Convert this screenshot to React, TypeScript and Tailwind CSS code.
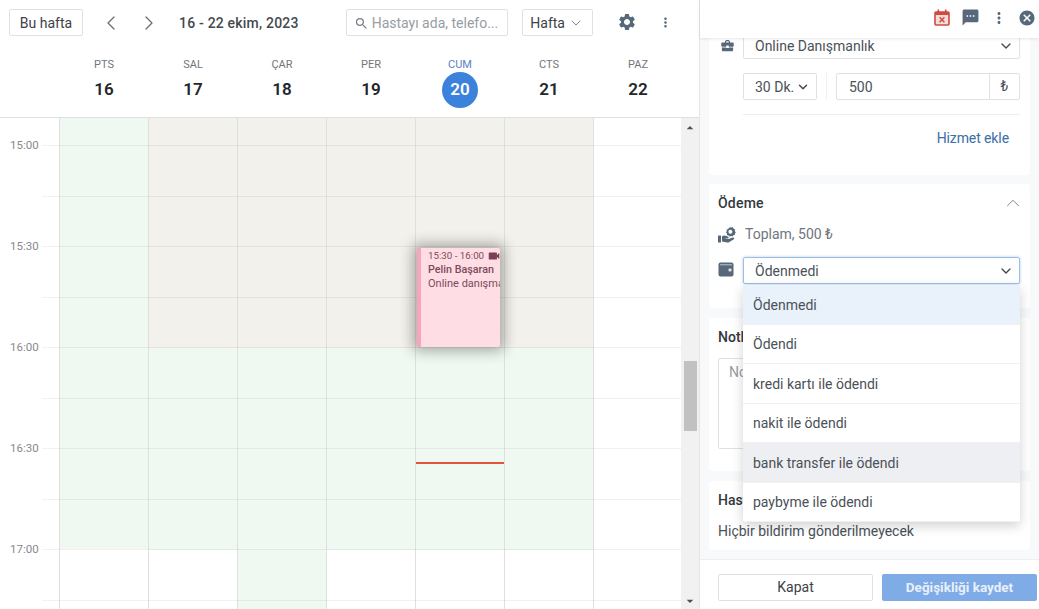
import { ChevronDown, ChevronLeft, ChevronRight, ChevronUp } from 'lucide-react';
import {
  MdArrowDropDown,
  MdArrowDropUp,
  MdBusinessCenter,
  MdCancel,
  MdMoreVert,
  MdSearch,
  MdSettings,
  MdSms,
  MdVideocam,
} from 'react-icons/md';

const days = [
  { label: 'PTS', date: 16 },
  { label: 'SAL', date: 17 },
  { label: 'ÇAR', date: 18 },
  { label: 'PER', date: 19 },
  { label: 'CUM', date: 20, today: true },
  { label: 'CTS', date: 21 },
  { label: 'PAZ', date: 22 },
];

// beige = closed part of the day, green = bookable
const columns = [
  { beige: false, green: 431 },
  { beige: true, green: 202 },
  { beige: true, green: 492 },
  { beige: true, green: 202 },
  { beige: true, green: 202 },
  { beige: true, green: 202 },
  { beige: false, green: 0 },
];

const rows = [28, 50.5, 50.5, 50.5, 50.5, 50.5, 50.5, 50.5, 50.5, 50.5];
const times = ['15:00', '15:30', '16:00', '16:30', '17:00'];
const paymentOptions = ['Ödenmedi', 'Ödendi', 'kredi kartı ile ödendi', 'nakit ile ödendi', 'bank transfer ile ödendi', 'paybyme ile ödendi'];

function CalendarCancelIcon() {
  return (
    <svg width="16" height="17" viewBox="0 0 16 17" className="mb-[1px]">
      <rect x="1" y="3" width="14" height="13" rx="1" fill="#f6dcd8" stroke="#cf4a42" strokeWidth="1.6" />
      <rect x="1" y="3" width="14" height="3" fill="#cf4a42" />
      <rect x="3.5" y="0.5" width="1.6" height="3.5" fill="#cf4a42" />
      <rect x="10.9" y="0.5" width="1.6" height="3.5" fill="#cf4a42" />
      <path d="M5.6 8.2l4.8 5M10.4 8.2l-4.8 5" stroke="#cf4a42" strokeWidth="1.4" fill="none" />
    </svg>
  );
}

function HandCoinIcon() {
  return (
    <svg width="18" height="17" viewBox="0 0 18 17" className="text-[#56687a]">
      <path
        fill="currentColor"
        d="M12 0.6l1.3 1 1.6-.3.7 1.5 1.5.7-.3 1.6 1 1.3-1 1.3.1 1.2-1.6.4-.9 1.2-1.5-.5-1.4.6-1-1.2-1.6-.3.1-1.6-1.1-1.2 1-1.3-.2-1.6 1.6-.5.7-1.4 1.5.4z"
      />
      <circle cx="12.4" cy="5.8" r="2" fill="#ffffff" />
      <rect x="0" y="9.5" width="3" height="7" rx="0.5" fill="currentColor" />
      <path
        fill="currentColor"
        d="M4 10.2c1.5-1 3-1 4.4-.3l1.8.9c.8.4.5 1.6-.4 1.6H7.6v.7h3l4.2-1.6c1.2-.4 2 1 1 1.7l-4.8 3.1c-.5.3-1 .4-1.6.3L4 15.5z"
      />
    </svg>
  );
}

function WalletIcon() {
  return (
    <svg width="16" height="15" viewBox="0 0 16 15" className="mt-[5px] text-[#56687a]">
      <rect x="0.5" y="0.5" width="15" height="14" rx="2" fill="currentColor" />
      <rect x="2" y="2" width="12" height="1.4" fill="#9fabb6" />
      <rect x="10.5" y="6.5" width="3" height="3" rx="1" fill="#dfe4e8" />
    </svg>
  );
}

function Calendar() {
  return (
    <div className="flex h-full w-[700px] shrink-0 flex-col border-r border-[#e3e5e8]">
      <div className="flex h-[45px] shrink-0 items-start pl-[9px] pt-[9px]">
        <button className="h-[27px] w-[74px] rounded-[2px] border border-[#dfe1e4] pt-[1px] text-[14px] text-[#3c4248]">Bu hafta</button>
        <ChevronLeft className="ml-[16px] mt-[2px] text-[#676d73]" size={24} strokeWidth={1.25} />
        <ChevronRight className="ml-[14px] mt-[2px] text-[#676d73]" size={24} strokeWidth={1.25} />
        <span className="ml-[18px] mt-[4px] text-[14px] font-medium tracking-[0.2px] text-[#43494f]">16 - 22 ekim, 2023</span>
        <div className="ml-[47px] flex h-[27px] w-[162px] items-center rounded-[2px] border border-[#dfe1e4] pl-[7px] pt-[1px] text-[14px] text-[#989da3]">
          <MdSearch className="text-[#7b8187]" size={15} />
          <span className="ml-[3px]">Hastayı ada, telefo...</span>
        </div>
        <button className="ml-[14px] flex h-[27px] w-[71px] items-center justify-center gap-[3px] rounded-[2px] border border-[#dfe1e4] pt-[1px] text-[14px] text-[#3c4248]">
          Hafta
          <ChevronDown className="text-[#676d73]" size={16} strokeWidth={1.25} />
        </button>
        <MdSettings className="ml-[24px] mt-[3px] text-[#56687a]" size={20} />
        <MdMoreVert className="ml-[21px] mt-[6px] text-[#56687a]" size={15} />
      </div>

      <div className="flex h-[73px] shrink-0 border-b border-[#dedfdf] pl-[59.5px]">
        {days.map((day) => (
          <div key={day.label} className="flex w-[89px] flex-col items-center">
            <span className={`mt-[13px] text-[11px] leading-[14px] ${day.today ? 'text-[#5b82c4]' : 'text-[#70767c]'}`}>{day.label}</span>
            <span
              className={`flex h-[36px] w-[36px] items-center justify-center rounded-full text-[17px] font-semibold ${
                day.today ? 'bg-[#3b82dc] text-white' : 'text-[#23272b]'
              }`}
            >
              {day.date}
            </span>
          </div>
        ))}
      </div>

      <div className="flex min-h-0 flex-1">
        <div className="relative flex min-w-0 flex-1 overflow-hidden">
          <div className="w-[59px] shrink-0 pt-[19px]">
            {times.map((time) => (
              <div key={time} className="h-[101px] pl-[10px] text-[11.5px] leading-[16px] text-[#858a8f]">
                {time}
              </div>
            ))}
          </div>

          {columns.map((column, i) => (
            <div key={i} className="flex w-[89px] shrink-0 flex-col border-l border-[#dfe0de]">
              {column.beige && <div className="h-[230px] shrink-0 bg-[#f2f1eb]" />}
              <div className="shrink-0 bg-[#f0f8f2]" style={{ height: column.green }} />
            </div>
          ))}

          <div className="pointer-events-none absolute inset-0 left-[42px] flex flex-col">
            {rows.map((height, i) => (
              <div key={i} className="shrink-0 border-b border-[#0000000e]" style={{ height }} />
            ))}
          </div>

          <div className="absolute left-[417px] top-[130px] flex h-[99px] w-[83px] overflow-hidden rounded-[2px] border-l-[4px] border-[#f5a6bd] bg-[#ffdde5] pl-[7px] pt-[1px] text-[#7c4a5a] shadow-[0_0_14px_4px_rgba(0,0,0,0.32)]">
            <div className="min-w-0 flex-1">
              <div className="flex items-center whitespace-nowrap text-[9.75px] leading-[14px]">
                15:30 - 16:00
                <MdVideocam className="ml-[3px] shrink-0 text-[#7c3f52]" size={14} />
              </div>
              <div className="whitespace-nowrap text-[10.75px] font-medium leading-[14px]">Pelin Başaran</div>
              <div className="whitespace-nowrap text-[11px] leading-[13px]">Online danışma</div>
            </div>
          </div>

          <div className="absolute left-[416px] top-[344px] h-[2px] w-[88px] bg-[#e2543f]" />
        </div>

        <div className="flex w-[18px] shrink-0 flex-col items-center bg-[#f1f1f1]">
          <MdArrowDropUp className="mt-[2px] text-[#505050]" size={16} />
          <div className="mt-[225px] h-[70px] w-[13px] bg-[#c1c1c1]" />
          <div className="flex-1" />
          <MdArrowDropDown className="text-[#505050]" size={16} />
        </div>
      </div>
    </div>
  );
}

function Panel() {
  return (
    <div className="flex h-full min-w-0 flex-1 flex-col bg-[#f7f9fb]">
      <div className="relative z-10 flex h-[38px] shrink-0 items-center justify-end bg-white pb-[3px] pr-[3px] shadow-[0_1px_3px_rgba(0,0,0,0.1)]">
        <CalendarCancelIcon />
        <MdSms className="ml-[11px] text-[#56687a]" size={19} />
        <MdMoreVert className="ml-[10px] text-[#56687a]" size={18} />
        <MdCancel className="ml-[10px] text-[#56687a]" size={18} />
      </div>

      <div className="min-h-0 flex-1 overflow-hidden px-[9px]">
        <div className="-mt-[18px] flex flex-col">
          <section className="h-[155px] rounded-[4px] bg-white pl-[9px] pr-[10px] pt-[12px]">
            <div className="flex">
              <MdBusinessCenter className="ml-[2px] mt-[6px] text-[#56687a]" size={15} />
              <div className="ml-[8px] flex h-[27px] flex-1 items-center justify-between rounded-[2px] border border-[#dfe1e4] pl-[11px] pr-[5px] pt-[1px] text-[14px] text-[#4a5158]">
                Online Danışmanlık
                <ChevronDown className="text-[#42484e]" size={16} strokeWidth={2} />
              </div>
            </div>
            <div className="ml-[25px] mt-[14px] flex">
              <div className="flex h-[27px] w-[74px] items-center justify-between rounded-[2px] border border-[#dfe1e4] pl-[11px] pr-[6px] pt-[1px] text-[14px] text-[#4a5158]">
                30 Dk.
                <ChevronDown className="text-[#42484e]" size={14} strokeWidth={2.5} />
              </div>
              <div className="mx-[9px] h-[27px] w-px bg-[#f0f1f3]" />
              <div className="flex h-[27px] flex-1 rounded-[2px] border border-[#dfe1e4] text-[14px] text-[#4a5158]">
                <span className="flex flex-1 items-center pl-[12px] pt-[1px]">500</span>
                <span className="flex w-[30px] items-center justify-center border-l border-[#dfe1e4] text-[14px]">₺</span>
              </div>
            </div>
            <div className="ml-[25px] mt-[14px] border-t border-[#eceef0] pt-[14px] pr-[11px] text-right text-[14px] leading-[18px] tracking-[-0.1px] text-[#3a6ea5]">Hizmet ekle</div>
          </section>

          <section className="mt-[9px] h-[124px] rounded-[4px] bg-white pl-[9px] pr-[10px] pt-[10px]">
            <div className="flex h-[18px] items-center justify-between">
              <span className="text-[14px] font-medium leading-[18px] tracking-[0.2px] text-[#33383d]">Ödeme</span>
              <ChevronUp className="-mr-[4px] text-[#767c82]" size={22} strokeWidth={1} />
            </div>
            <div className="mt-[13px] flex h-[18px] items-center text-[14px] text-[#6e767e]">
              <HandCoinIcon />
              <span className="ml-[9px]">Toplam, 500 ₺</span>
            </div>
            <div className="mt-[14px] flex">
              <WalletIcon />
              <div className="relative z-20 ml-[9px] flex-1">
                <div className="flex h-[27px] items-center justify-between rounded-[2px] border border-[#9dbde6] pl-[11px] pr-[5px] pt-[1px] text-[14px] text-[#4a5158] shadow-[0_0_3px_rgba(59,130,220,0.4)]">
                  Ödenmedi
                  <ChevronDown className="text-[#42484e]" size={16} strokeWidth={2} />
                </div>
                <div className="absolute left-0 right-0 top-[28px] overflow-hidden rounded-b-[3px] bg-white shadow-[0_4px_12px_rgba(0,0,0,0.18)]">
                  {paymentOptions.map((option, i) => (
                    <div
                      key={option}
                      className={`flex h-[39.5px] items-center border-b border-[#f0f1f3] pl-[10px] pt-[2px] text-[14px] text-[#4a5158] ${
                        i === 0 ? 'bg-[#e9f1fb]' : i === 4 ? 'bg-[#eeeff3]' : 'bg-white'
                      }`}
                    >
                      {option}
                    </div>
                  ))}
                </div>
              </div>
            </div>
          </section>

          <section className="mt-[10px] h-[153px] rounded-[4px] bg-white pl-[9px] pr-[10px] pt-[10px]">
            <div className="text-[14px] font-medium leading-[18px] text-[#33383d]">Notlar</div>
            <div className="mt-[12px] h-[91px] rounded-[2px] border border-[#dfe1e4] pl-[10px] pt-[3px] text-[14px] text-[#989da3]">Not ekle</div>
          </section>

          <section className="mt-[10px] h-[69px] rounded-[4px] bg-white pl-[9px] pr-[10px] pt-[10px]">
            <div className="text-[14px] font-medium leading-[18px] text-[#33383d]">Hasta bildirimleri</div>
            <div className="mt-[13px] text-[14px] leading-[18px] text-[#4a5158]">Hiçbir bildirim gönderilmeyecek</div>
          </section>
        </div>
      </div>

      <div className="relative z-30 flex h-[50px] shrink-0 items-start gap-[9px] border-t border-[#eceef0] bg-white pl-[18px] pr-[2px] pt-[14px]">
        <button className="h-[27px] w-[155px] rounded-[2px] border border-[#dfe1e4] text-[14px] text-[#3c4248]">Kapat</button>
        <button className="h-[27px] w-[155px] rounded-[2px] bg-[#7fabe6] text-[13.5px] font-bold text-[#e8f0fb]">Değişikliği kaydet</button>
      </div>
    </div>
  );
}

export default function App() {
  return (
    <div className="flex h-[609px] w-[1039px] overflow-hidden bg-white font-['Roboto',sans-serif]">
      <Calendar />
      <Panel />
    </div>
  );
}
